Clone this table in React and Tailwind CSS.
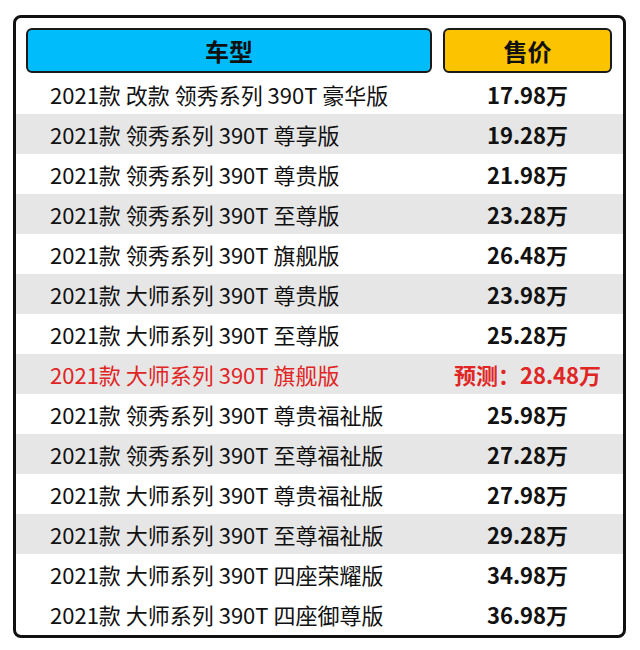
const ROWS = [
    { name: '2021款 改款 领秀系列 390T 豪华版', price: '17.98万' },
    { name: '2021款 领秀系列 390T 尊享版', price: '19.28万' },
    { name: '2021款 领秀系列 390T 尊贵版', price: '21.98万' },
    { name: '2021款 领秀系列 390T 至尊版', price: '23.28万' },
    { name: '2021款 领秀系列 390T 旗舰版', price: '26.48万' },
    { name: '2021款 大师系列 390T 尊贵版', price: '23.98万' },
    { name: '2021款 大师系列 390T 至尊版', price: '25.28万' },
    { name: '2021款 大师系列 390T 旗舰版', price: '预测：28.48万', highlight: true },
    { name: '2021款 领秀系列 390T 尊贵福祉版', price: '25.98万' },
    { name: '2021款 领秀系列 390T 至尊福祉版', price: '27.28万' },
    { name: '2021款 大师系列 390T 尊贵福祉版', price: '27.98万' },
    { name: '2021款 大师系列 390T 至尊福祉版', price: '29.28万' },
    { name: '2021款 大师系列 390T 四座荣耀版', price: '34.98万' },
    { name: '2021款 大师系列 390T 四座御尊版', price: '36.98万' },
];

export default function App() {
    return (
        <div className="w-[640px] h-[650px] bg-white pt-[15px] pl-[13px] font-['Noto_Sans_CJK_SC','Noto_Sans',sans-serif] text-[#111]">
            <div className="w-[613px] h-[623px] border-[3px] border-[#111] rounded-lg overflow-hidden">
                {/* Header */}
                <div className="flex gap-[11px] px-[10px] pt-[10px]">
                    <div className="w-[406px] h-[45px] bg-[#00bcfa] border-2 border-[#1a1a1a] rounded-md flex items-center justify-center text-[24px] font-bold leading-none">
                        车型
                    </div>
                    <div className="w-[169px] h-[45px] bg-[#fbc300] border-2 border-[#1a1a1a] rounded-md flex items-center justify-center text-[24px] font-bold leading-none">
                        售价
                    </div>
                </div>

                {/* Rows: stripes stop after row 12 */}
                <div className="mt-[1px]">
                    {ROWS.map((row, i) => (
                        <div key={i}
                            className={`flex items-center h-[40px] text-[22px] leading-none ${i % 2 === 1 && i < 12 ? 'bg-[#e6e6e6]' : ''} ${row.highlight ? 'text-[#e02525]' : ''}`}>
                            <div className="w-[427px] pl-[34px] whitespace-nowrap">{row.name}</div>
                            <div className="w-[169px] text-center font-bold whitespace-nowrap">{row.price}</div>
                        </div>
                    ))}
                </div>
            </div>
        </div>
    );
}
